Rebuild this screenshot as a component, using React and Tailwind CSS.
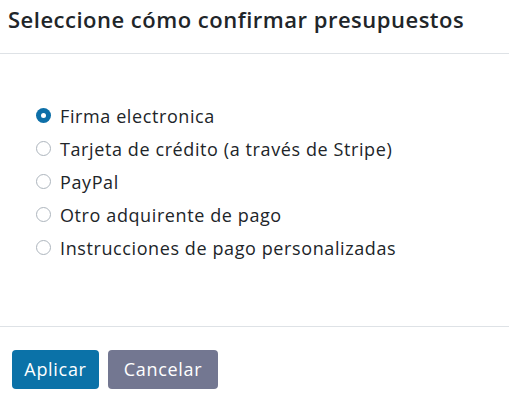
import React from "react";

const options = [
  "Firma electronica",
  "Tarjeta de crédito (a través de Stripe)",
  "PayPal",
  "Otro adquirente de pago",
  "Instrucciones de pago personalizadas",
];

export default function App() {
  return (
    <div className="w-[509px] h-[403px] bg-white text-[#212529]" style={{ fontFamily: '"Open Sans", "Noto Sans", sans-serif' }}>
      <div className="h-[54px] border-b border-[#dee2e6] flex items-center px-[8px]">
        <h1 className="text-[22px] font-semibold tracking-[0.5px] leading-none -mt-[16px]">Seleccione cómo confirmar presupuestos</h1>
      </div>
      <div className="h-[272px] pt-[45px] pl-[36px]">
        {options.map((o, i) => (
          <label key={o} className="flex items-center h-[33px] gap-[9px]">
            {i === 0 ? (
              <span className="w-[15px] h-[15px] rounded-full bg-[#0d6fa8] flex items-center justify-center">
                <span className="w-[5px] h-[5px] rounded-full bg-white" />
              </span>
            ) : (
              <span className="w-[15px] h-[15px] rounded-full border border-[#adb5bd] bg-white" />
            )}
            <span className="text-[18px] tracking-[0.6px] leading-none">{o}</span>
          </label>
        ))}
      </div>
      <div className="border-t border-[#dee2e6] pt-[23px] px-[12px] flex gap-[9px]">
        <button className="h-[39px] w-[87px] rounded-[4px] bg-[#0b72a8] text-white text-[18px] tracking-[0.7px]">Aplicar</button>
        <button className="h-[39px] w-[110px] rounded-[4px] bg-[#737791] text-white text-[18px] tracking-[0.7px]">Cancelar</button>
      </div>
    </div>
  );
}
